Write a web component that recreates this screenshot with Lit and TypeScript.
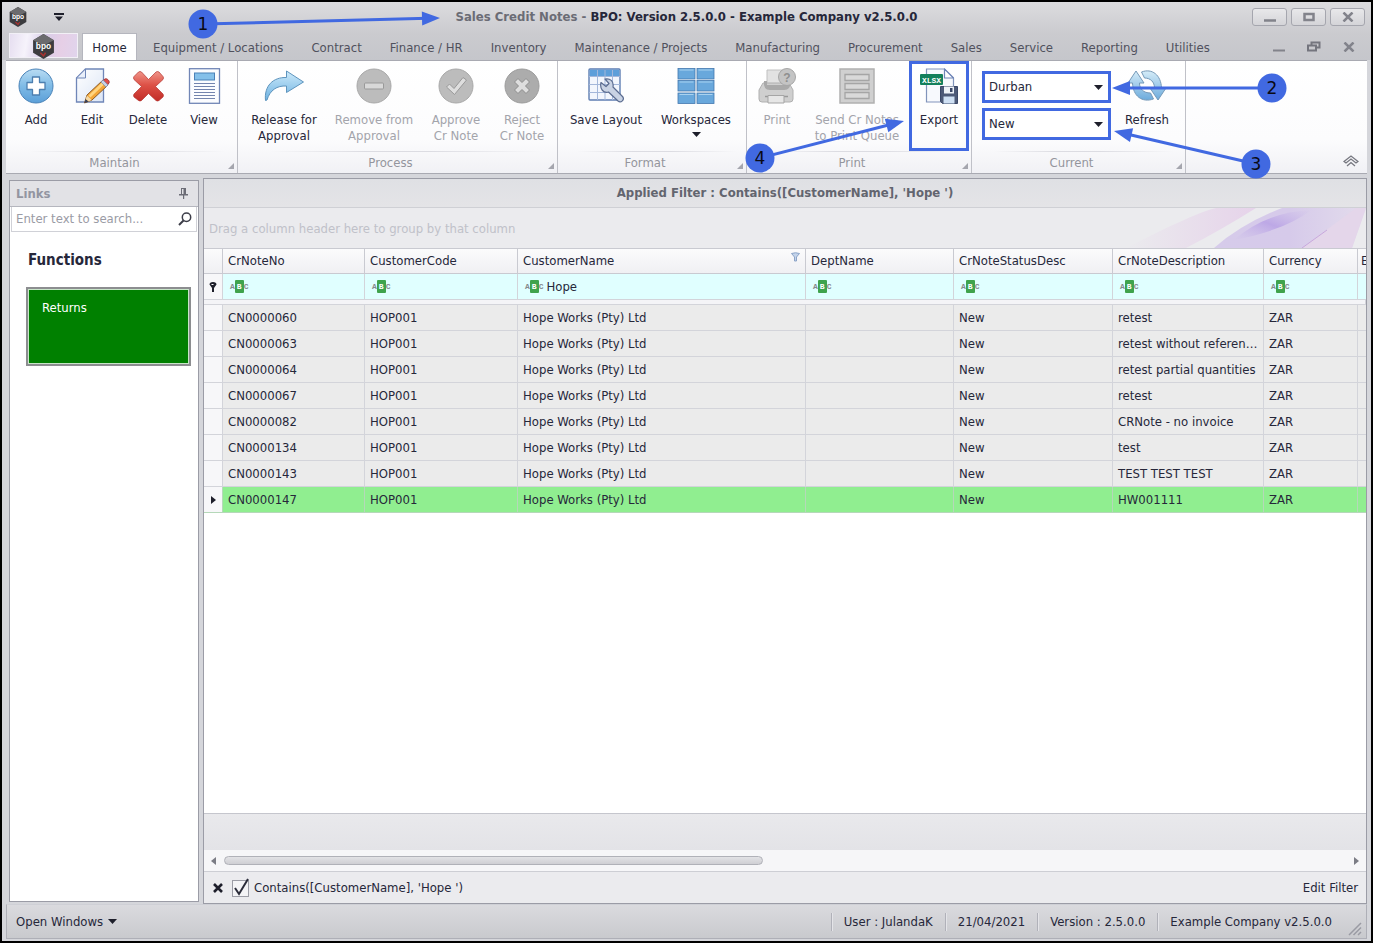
import { LitElement, html, css, nothing, TemplateResult } from "lit";
import { customElement, property } from "lit/decorators.js";
import { classMap } from "lit/directives/class-map.js";
import { styleMap } from "lit/directives/style-map.js";

const icons: Record<string, TemplateResult> = {
  add: html`<svg viewBox="0 0 36 36" width="36" height="36" aria-hidden="true">
    <defs><linearGradient id="g" x1="0" y1="0" x2="0" y2="1"><stop offset="0" stop-color="#b9dcf3" /><stop offset="0.5" stop-color="#7fbbe6" /><stop offset="1" stop-color="#5b9fd8" /></linearGradient></defs>
    <circle cx="18" cy="18" r="17" fill="url(#g)" stroke="#4a83b8" />
    <path d="M14.5 9h7v5.500h5.500v7h-5.500v5.500h-7v-5.500h-5.500v-7h5.500z" fill="#fff" stroke="#4d7fb0" stroke-width="1.300" stroke-linejoin="round" />
  </svg>`,
  edit: html`<svg viewBox="0 0 36 36" width="36" height="36" aria-hidden="true">
    <defs><linearGradient id="p" x1="0" y1="0" x2="1" y2="1"><stop offset="0" stop-color="#fff" /><stop offset="1" stop-color="#dbe5f5" /></linearGradient></defs>
    <path d="M11.500 1h18v33h-27v-24z" fill="url(#p)" stroke="#6f86b8" stroke-width="1.300" />
    <path d="M11.500 1v9h-9z" fill="#e9effa" stroke="#6f86b8" stroke-linejoin="round" />
    <path d="M10.500 35l2.500-8 16-15 5 5-16 15z" fill="#f3a638" stroke="#8a5a27" stroke-linejoin="round" />
    <path d="M14.500 27.500l14.500-14 2 2-14.500 14z" fill="#ffd581" />
    <path d="M29 12.500l2-1.500c2-1 5 2 4 4l-1.500 2z" fill="#e0504a" stroke="#a23a3a" />
    <path d="M27 14l2-2 5 5-2 2z" fill="#c7d3e6" stroke="#7c8bab" stroke-width="0.700" />
    <path d="M10.500 35l1.200-4 3 2.500z" fill="#39425c" />
    <path d="M13 27.500l-1.300 3.500 3 2.500 3-1.500z" fill="#f4d9a6" />
  </svg>`,
  del: html`<svg viewBox="0 0 36 36" width="36" height="36" aria-hidden="true">
    <defs><linearGradient id="r" x1="0" y1="0" x2="0" y2="1"><stop offset="0" stop-color="#f0958a" /><stop offset="0.450" stop-color="#dd5247" /><stop offset="1" stop-color="#c22c27" /></linearGradient></defs>
    <path d="M4 8.500L8.500 4q1.500-1 3 0L18.500 11.500 26 4q1.500-1 3 0L33 8.500q1 1.500 0 3L25.500 18.500 33 26q1 1.500 0 3L29 32.500q-1.500 1-3 0L18.500 25.500 11.500 32.500q-1.500 1-3 0L4 29q-1-1.500 0-3L11.500 18.500 4 11.500q-1-1.500 0-3z" fill="url(#r)" stroke="#b3342f" stroke-width="0.700" />
  </svg>`,
  view: html`<svg viewBox="0 0 36 36" width="36" height="36" aria-hidden="true">
    <rect x="3.500" y="0.700" width="30" height="34.600" fill="#fbfcff" stroke="#7186b6" stroke-width="1.300" />
    <rect x="8.500" y="5" width="20" height="7" fill="#84c0ea" stroke="#4b81b8" />
    <path d="M8 15.500h21M8 18.500h21M8 21.500h21M8 24.500h21M8 27.500h21M8 30.500h21" stroke="#7384ae" stroke-width="1.200" />
  </svg>`,
  release: html`<svg viewBox="0 0 40 36" width="40" height="36" aria-hidden="true">
    <defs><linearGradient id="a" x1="0" y1="0" x2="0" y2="1"><stop offset="0" stop-color="#cdeafa" /><stop offset="1" stop-color="#6db2e2" /></linearGradient></defs>
    <path d="M1.500 32.500C0 18 9 9 22.500 9.500V3L39.500 14 22.500 24.500v-6.500C13 17.500 6 22 3 32z" fill="url(#a)" stroke="#5e94bd" stroke-linejoin="round" />
  </svg>`,
  remove: html`<svg viewBox="0 0 36 36" width="36" height="36" aria-hidden="true">
    <circle cx="18" cy="18" r="17" fill="#bcbcbc" stroke="#a9a9a9" />
    <rect x="8.500" y="15" width="19" height="6" rx="1" fill="#d8d8d8" stroke="#999" />
  </svg>`,
  approve: html`<svg viewBox="0 0 36 36" width="36" height="36" aria-hidden="true">
    <circle cx="18" cy="18" r="17" fill="#bcbcbc" stroke="#a9a9a9" />
    <path d="M8.500 19l3-3 4.500 4.500L25 9.500l3.500 2.500L16.500 26.500z" fill="#dedede" stroke="#999" stroke-linejoin="round" />
  </svg>`,
  reject: html`<svg viewBox="0 0 36 36" width="36" height="36" aria-hidden="true">
    <circle cx="18" cy="18" r="17" fill="#acacac" stroke="#9c9c9c" />
    <path d="M10.500 14l3.500-3.500 4 4 4-4 3.500 3.500-4 4 4 4-3.500 3.500-4-4-4 4-3.500-3.500 4-4z" fill="#dedede" stroke="#8d8d8d" stroke-linejoin="round" />
  </svg>`,
  layout: html`<svg viewBox="0 0 36 36" width="36" height="36" aria-hidden="true">
    <rect x="1" y="1" width="31" height="31" rx="1" fill="#f2f6fd" stroke="#5f7eb2" stroke-width="1.400" />
    <rect x="1.700" y="1.700" width="29.600" height="7" fill="#5d9fda" />
    <path d="M9.500 2v30M17 2v30M24.500 2v30M1 8.500h31M1 16.500h31M1 24.500h31" stroke="#a3b7da" />
    <path d="M13 14.500l5 4 3-3-4-4.500c5-1 9 2 8 8l9.500 9.500c2.500 3-1.500 7-4.500 4.500L20.500 24c-5 1.500-9-3-7.500-9.500z" fill="#c9d3e4" stroke="#5b6c90" stroke-width="1.200" stroke-linejoin="round" />
  </svg>`,
  workspaces: html`<svg viewBox="0 0 38 36" width="38" height="36" aria-hidden="true">
    ${[0.5, 12.5, 25].map((y) => [1, 20].map((x) => html`<svg x="0" y="0" viewBox="0 0 38 36" width="38" height="36"><rect x=${x} y=${y} width="17" height="10.500" fill="#69a8dc" stroke="#4478ae" stroke-width="0.800" /><path d="M${x + 1.5} ${y + 1.500}h14" stroke="#a9d2f0" /></svg>`))}
  </svg>`,
  print: html`<svg viewBox="0 0 38 36" width="38" height="36" aria-hidden="true">
    <path d="M9 2h18v15H9z" fill="#e2e2e2" stroke="#c0c0c0" />
    <path d="M5 15l-4 7v9q0 3 3 3h28q3 0 3-3v-9l-4-7z" fill="#cfcfcf" stroke="#b0b0b0" />
    <path d="M6 13h3v4h18v-4l5 1q1 8-6 8H12q-7 0-6-9z" fill="#a9a9a9" />
    <path d="M7 28.500h23" stroke="#999" stroke-width="1.500" />
    <path d="M10 27.500h16v7.500H10z" fill="#e6e6e6" stroke="#a5a5a5" />
    <circle cx="29" cy="9" r="8.500" fill="#c4c4c4" stroke="#a6a6a6" />
    <text x="29" y="13.500" text-anchor="middle" class="q">?</text>
  </svg>`,
  queue: html`<svg viewBox="0 0 36 36" width="36" height="36" aria-hidden="true">
    <rect x="1" y="1" width="34" height="34" fill="#d0d0d0" stroke="#b0b0b0" stroke-width="1.500" />
    <path d="M6 6.500h24v6H6zM6 15.500h24v6H6zM6 24.500h24v6H6z" fill="#d9d9d9" stroke="#a5a5a5" stroke-width="1.300" />
  </svg>`,
  export: html`<svg viewBox="0 0 38 36" width="38" height="36" aria-hidden="true">
    <path d="M6.500 1h18l9 9v24h-27z" fill="#f7f9fd" stroke="#8194bb" stroke-width="1.200" />
    <path d="M24.500 1v9h9z" fill="#fff" stroke="#6f86b8" stroke-width="1.200" stroke-linejoin="round" />
    <rect x="0" y="6" width="23" height="11" rx="1" fill="#14805c" />
    <text x="11.500" y="14.500" text-anchor="middle" class="x">XLSX</text>
    <path d="M20.500 18.500h17v17h-15l-2-2z" fill="#4d5a78" stroke="#3b4868" />
    <path d="M24 18.500h10v7h-10z" fill="#eef2f8" /><path d="M30 20h2.500v4h-2.500z" fill="#3b4868" />
    <path d="M23.500 28.500h11v7h-11z" fill="#cfe0f4" />
  </svg>`,
  refresh: html`<svg viewBox="0 0 38 36" width="38" height="36" aria-hidden="true">
    <defs><linearGradient id="f" x1="0" y1="0" x2="0" y2="1"><stop offset="0" stop-color="#d5ecf8" /><stop offset="1" stop-color="#6cabdc" /></linearGradient></defs>
    <path d="M8 3l8 12h-4.500c0 6 4 10 11 10l3 6C14 35 5 28 4.500 15H0z" fill="url(#f)" stroke="#7599b8" stroke-linejoin="round" />
    <path d="M30 32l-8-12h4.500c0-6-4-10-10-10l-3-6C24 0 33 7 33.500 20H38z" fill="url(#f)" stroke="#7599b8" stroke-linejoin="round" />
  </svg>`,
};

const logo = (size: number) => html`<svg viewBox="0 0 24 24" width=${size} height=${size} aria-hidden="true">
  <path d="M12 0l10 6v12l-10 6-10-6V6z" fill="#3c3c3f" />
  <path d="M12 0l10 6-10 5L2 6z" fill="#6b6b6e" />
  <path d="M9 18l3 3 2-3" stroke="#a8322f" stroke-width="1.500" fill="none" />
  <text x="12" y="14" text-anchor="middle" class="logo">bpo</text>
</svg>`;

interface Action {
  icon: string;
  lines: string[];
  size: string;
  disabled?: boolean;
  menu?: boolean;
  marked?: boolean;
}
interface Group {
  title: string;
  size: string;
  actions: Action[];
  filters?: string[];
}

const groups: Group[] = [
  {
    title: "Maintain", size: "g-maintain", actions: [
      { icon: "add", lines: ["Add"], size: "w56" },
      { icon: "edit", lines: ["Edit"], size: "w56" },
      { icon: "del", lines: ["Delete"], size: "w56" },
      { icon: "view", lines: ["View"], size: "w56" },
    ],
  },
  {
    title: "Process", size: "g-process", actions: [
      { icon: "release", lines: ["Release for", "Approval"], size: "w88" },
      { icon: "remove", lines: ["Remove from", "Approval"], size: "w92", disabled: true },
      { icon: "approve", lines: ["Approve", "Cr Note"], size: "w72", disabled: true },
      { icon: "reject", lines: ["Reject", "Cr Note"], size: "w60", disabled: true },
    ],
  },
  {
    title: "Format", size: "g-format", actions: [
      { icon: "layout", lines: ["Save Layout"], size: "w92" },
      { icon: "workspaces", lines: ["Workspaces"], size: "w88", menu: true },
    ],
  },
  {
    title: "Print", size: "g-print", actions: [
      { icon: "print", lines: ["Print"], size: "w56", disabled: true },
      { icon: "queue", lines: ["Send Cr Notes", "to Print Queue"], size: "w104", disabled: true },
      { icon: "export", lines: ["Export"], size: "w60", marked: true },
    ],
  },
  {
    title: "Current", size: "g-current", filters: ["Durban", "New"], actions: [
      { icon: "refresh", lines: ["Refresh"], size: "w72" },
    ],
  },
];

const tabs = ["Home", "Equipment / Locations", "Contract", "Finance / HR", "Inventory", "Maintenance / Projects", "Manufacturing", "Procurement", "Sales", "Service", "Reporting", "Utilities"];

const columns = [
  { name: "CrNoteNo", width: 142 },
  { name: "CustomerCode", width: 153 },
  { name: "CustomerName", width: 288, filter: "Hope" },
  { name: "DeptName", width: 148 },
  { name: "CrNoteStatusDesc", width: 159 },
  { name: "CrNoteDescription", width: 151 },
  { name: "Currency", width: 94 },
];

const notes: [string, string][] = [
  ["CN0000060", "retest"],
  ["CN0000063", "retest without reference"],
  ["CN0000064", "retest partial quantities"],
  ["CN0000067", "retest"],
  ["CN0000082", "CRNote - no invoice"],
  ["CN0000134", "test"],
  ["CN0000143", "TEST TEST TEST"],
  ["CN0000147", "HW001111"],
];

const base = css`
  * { box-sizing: border-box; }
  button, input, select { font: inherit; color: inherit; margin: 0; }
  button { background: none; border: 0; padding: 0; }
  svg { display: block; flex: none; }
  .logo { font: bold 8px "Liberation Sans", sans-serif; fill: #fff; }
`;

@customElement("ribbon-bar")
export class RibbonBar extends LitElement {
  static styles = [base, css`
    :host { display: flex; height: 114px; border: 1px solid #a9aab2; border-width: 1px 0; background: linear-gradient(#fff, #fcfcfd 70%, #f1f1f5); }
    .group { display: flex; flex-direction: column; border-right: 1px solid #c0c1c8; }
    .g-maintain { width: 232px; }
    .g-process { width: 320px; }
    .g-format { width: 189px; }
    .g-print { width: 225px; }
    .g-current { width: 214px; }
    .items { flex: 1; display: flex; padding-left: 2px; min-height: 0; }
    .g-current .items { padding-left: 10px; }
    .action { display: flex; flex-direction: column; align-items: center; border: 3px solid transparent; padding-top: 4px; white-space: nowrap; line-height: 16px; }
    .action svg { margin-bottom: 8px; }
    .action .caret { margin: 4px 0 0; }
    .action:disabled { color: #a3a4ab; }
    .action.marked { border-color: #4169e1; }
    .w56 { width: 56px; } .w60 { width: 60px; } .w72 { width: 72px; }
    .w88 { width: 88px; } .w92 { width: 92px; } .w104 { width: 104px; }
    .foot { height: 22px; display: flex; align-items: center; color: #94959d; line-height: 20px; background: linear-gradient(90deg, transparent 10%, #dcdce2 40%, #dcdce2 60%, transparent 95%) top / 100% 1px no-repeat; }
    .foot span { flex: 1; text-align: center; padding: 2px 5px 0 0; }
    .foot svg { align-self: flex-end; margin: 0 3px 4px 0; }
    .filters { display: flex; flex-direction: column; gap: 5px; padding-top: 10px; }
    .pick { display: grid; }
    .pick > * { grid-area: 1 / 1; }
    .pick svg { justify-self: end; align-self: center; margin-right: 8px; pointer-events: none; }
    select { appearance: none; width: 129px; height: 32px; border: 3px solid #4169e1; border-radius: 0; background: #fff; padding: 0 20px 0 4px; }
    .rest { flex: 1; display: flex; justify-content: flex-end; align-items: flex-end; padding: 0 8px 6px 0; }
    .q { font: bold 12px "Liberation Sans", sans-serif; fill: #8f8f8f; }
    .x { font: bold 8px "Liberation Mono", monospace; fill: #fff; }
  `];

  caret() {
    return html`<svg class="caret" viewBox="0 0 9 5" width="9" height="5" aria-hidden="true"><path d="M0 0h9L4.500 5z" fill="#1e1f2b" /></svg>`;
  }

  render() {
    return html`${groups.map((g) => html`
      <section class="group ${g.size}">
        <div class="items">
          ${g.filters ? html`<div class="filters">${g.filters.map((f) => html`
            <label class="pick"><select aria-label=${f === "New" ? "Status" : "Site"}><option>${f}</option></select>${this.caret()}</label>`)}</div>` : nothing}
          ${g.actions.map((a) => html`
            <button class=${classMap({ action: true, [a.size]: true, marked: !!a.marked })} ?disabled=${a.disabled}>
              ${icons[a.icon]}${a.lines.map((l) => html`<span>${l}</span>`)}${a.menu ? this.caret() : nothing}
            </button>`)}
        </div>
        <div class="foot"><span>${g.title}</span><svg viewBox="0 0 6 6" width="6" height="6" aria-hidden="true"><path d="M6 0v6H0z" fill="#a5a6ae" /></svg></div>
      </section>`)}
      <div class="rest"><button aria-label="Collapse ribbon"><svg viewBox="0 0 16 12" width="16" height="12"><path d="M1 6.500L8 1l7 5.500-2 1.500-5-4-5 4zM4 11l4-3.500 4 3.500" fill="none" stroke="#777880" stroke-width="1.300" /></svg></button></div>`;
  }
}

@customElement("credit-note-grid")
export class CreditNoteGrid extends LitElement {
  static styles = [base, css`
    :host { display: flex; flex-direction: column; min-width: 0; overflow: hidden; border: 1px solid #9b9ca6; background: #fff; }
    .caption { height: 29px; line-height: 28px; text-align: center; font-weight: bold; color: #63656f; background: linear-gradient(#dfe0e4, #e4e4e7); border-bottom: 1px solid #cfd0d5; }
    .grouping { display: flex; justify-content: space-between; height: 40px; line-height: 42px; color: #c0c1c9; background: #ebebee; padding-left: 5px; }
    .wrap { overflow: hidden; }
    table { width: 100%; table-layout: fixed; border-collapse: separate; border-spacing: 0; }
    th, td { height: 26px; padding: 0 5px; text-align: left; font-weight: normal; white-space: nowrap; overflow: hidden; text-overflow: ellipsis; border: 0 solid #d3d4da; border-width: 0 1px 1px 0; }
    .mark { padding: 0; background: #f7f7f9; }
    .mark svg { margin: 0 auto; }
    .head th { background: linear-gradient(#fbfbfc, #f0f0f3); border-top: 1px solid #c9cad1; border-color: #c9cad1; }
    .last { text-overflow: clip; padding: 0 0 0 3px; border-right: 0; }
    .cell { display: flex; justify-content: space-between; }
    .find td { background: #e0ffff; }
    .find .mark { background: #f7f7f9; }
    .search { display: flex; align-items: center; }
    .abc { display: flex; align-items: center; font: bold 8px/13px "Liberation Mono", monospace; color: #85888c; padding: 0 3px 0 2px; }
    .abc b { background: #3fa34d; color: #fff; padding: 0 2px; border-radius: 1px; }
    .search input { flex: 1; min-width: 0; width: 0; border: 0; padding: 0; background: none; outline: 0; }
    .gap td { height: 5px; padding: 0; background: #f4f4f7; }
    .row td { background: #ebebeb; }
    .row .mark { background: #f7f7f9; }
    .row.on td { background: #90ee90; border-color: #b5d8b9; }
    .row.on .mark { background: #f7f7f9; }
    .fill { flex: 1; }
    .summary { height: 37px; border-top: 1px solid #c5c6cd; background: linear-gradient(#e9e9ec, #e3e3e7); }
    .scroll { height: 21px; display: flex; align-items: center; gap: 8px; padding: 0 7px; background: #f6f6f8; }
    .track { flex: 1; }
    .thumb { height: 9px; border: 1px solid #b0b1b8; border-radius: 5px; background: linear-gradient(#e2e2e5, #cfcfd4); }
    .expr { height: 32px; display: flex; align-items: center; border-top: 1px solid #cdced4; background: #ebebee; padding: 0 8px; }
    .check { display: flex; align-items: center; gap: 4px; margin: 0 auto 0 8px; }
    .tick { display: grid; }
    .tick > * { grid-area: 1 / 1; }
    .tick input { appearance: none; width: 17px; height: 17px; align-self: end; border: 1px solid #9c9da6; background: #f4f4f6; }
    .tick svg { pointer-events: none; }
  `];

  render() {
    return html`
      <div class="caption">Applied Filter : Contains([CustomerName], 'Hope ')</div>
      <div class="grouping"><span>Drag a column header here to group by that column</span>
        <svg viewBox="0 0 260 40" width="260" height="40" aria-hidden="true">
          <defs>
            <linearGradient id="v" x1="0" y1="0" x2="1" y2="0"><stop offset="0" stop-color="#d6cbea" /><stop offset="0.500" stop-color="#d6caea" /><stop offset="1" stop-color="#e3dcec" /></linearGradient>
            <linearGradient id="k" x1="0" y1="0" x2="1" y2="0"><stop offset="0" stop-color="#ebebee" /><stop offset="1" stop-color="#e6d3ea" /></linearGradient>
            <linearGradient id="s" x1="0" y1="1" x2="1" y2="0"><stop offset="0" stop-color="#cbbbe9" stop-opacity="0" /><stop offset="0.500" stop-color="#bda8e6" /><stop offset="1" stop-color="#cbbbe9" stop-opacity="0" /></linearGradient>
          </defs>
          <path d="M20 40C60 20 90 5 110 0h40Q115 22 80 40z" fill="url(#k)" />
          <path d="M108 40Q135 16 176 0h84l-14 40z" fill="url(#v)" />
          <path d="M128 32Q160 4 205 2 180 22 128 32z" fill="url(#s)" />
          <path d="M196 40L250 0h10l-14 40z" fill="#e4d6ea" />
          <path d="M196 40l25-18" stroke="#c7a8dc" />
        </svg>
      </div>
      <div class="wrap"><table>
        <colgroup><col style="width:19px">${columns.map((c) => html`<col style=${styleMap({ width: `${c.width}px` })}>`)}<col></colgroup>
        <thead>
          <tr class="head"><th class="mark"></th>${columns.map((c) => html`<th><div class="cell">${c.name}${c.filter ? html`<svg viewBox="0 0 9 10" width="9" height="10" aria-hidden="true"><path d="M0.500 1.500q4-1.500 8 0L5.500 5v4h-2V5z" fill="#c3d3ea" stroke="#8ba3c7" /></svg>` : nothing}</div></th>`)}<th class="last">E</th></tr>
          <tr class="find"><td class="mark"><svg viewBox="0 0 8 10" width="8" height="10" aria-hidden="true"><path d="M0.500 2.500q0-2.500 3.500-2.500t3.500 2.500L5 6v4H3V6z" fill="#1e1f2b" /><path d="M2.500 2.500h2" stroke="#fff" /></svg></td>
            ${columns.map((c) => html`<td><label class="search"><span class="abc" aria-hidden="true">A<b>B</b>C</span><input aria-label="Filter ${c.name}" .value=${c.filter ?? ""}></label></td>`)}<td class="last"></td></tr>
          <tr class="gap"><td colspan="9"></td></tr>
        </thead>
        <tbody>
          ${notes.map(([no, text], i) => html`<tr class=${classMap({ row: true, on: i === notes.length - 1 })}>
            <td class="mark">${i === notes.length - 1 ? html`<svg viewBox="0 0 5 8" width="5" height="8" aria-hidden="true"><path d="M0 0l5 4-5 4z" fill="#1e1f2b" /></svg>` : nothing}</td>
            <td>${no}</td><td>HOP001</td><td>Hope Works (Pty) Ltd</td><td></td><td>New</td><td>${text}</td><td>ZAR</td><td class="last"></td></tr>`)}
        </tbody>
      </table></div>
      <div class="fill"></div>
      <div class="summary"></div>
      <div class="scroll">
        <svg viewBox="0 0 5 8" width="5" height="8" aria-hidden="true"><path d="M5 0L0 4l5 4z" fill="#7b7c85" /></svg>
        <div class="track"><div class="thumb" style=${styleMap({ width: "48%" })}></div></div>
        <svg viewBox="0 0 5 8" width="5" height="8" aria-hidden="true"><path d="M0 0l5 4-5 4z" fill="#7b7c85" /></svg>
      </div>
      <div class="expr">
        <button aria-label="Clear filter"><svg viewBox="0 0 12 10" width="12" height="10"><path d="M2 1l8 8M10 1L2 9" stroke="#1e1f2b" stroke-width="2.600" /></svg></button>
        <label class="check"><span class="tick"><input type="checkbox" checked><svg viewBox="0 0 18 19" width="18" height="19" aria-hidden="true"><path d="M3 10l4 6L16 1" fill="none" stroke="#2b2c3a" stroke-width="2" /></svg></span>Contains([CustomerName], 'Hope ')</label>
        <button>Edit Filter</button>
      </div>`;
  }
}

@customElement("callout-layer")
export class CalloutLayer extends LitElement {
  static styles = css`
    :host { position: absolute; inset: -2px; pointer-events: none; overflow: hidden; }
    svg { display: block; width: 100%; height: 100%; }
    path { fill: #4169e1; }
    line { stroke: #4169e1; stroke-width: 3; }
    circle { fill: #4169e1; }
    text { font: 17px "DejaVu Sans", sans-serif; text-anchor: middle; fill: #0a0a14; }
  `;
  @property({ attribute: false }) marks = [
    { n: 1, x: 203, y: 24, tx: 440, ty: 18 },
    { n: 2, x: 1272, y: 88, tx: 1112, ty: 88 },
    { n: 3, x: 1256, y: 164, tx: 1114, ty: 131 },
    { n: 4, x: 760, y: 158, tx: 904, ty: 121 },
  ];
  render() {
    return html`<svg aria-hidden="true">${this.marks.map((m) => {
      const angle = (Math.atan2(m.ty - m.y, m.tx - m.x) * 180) / Math.PI;
      const length = Math.hypot(m.tx - m.x, m.ty - m.y);
      return html`<svg overflow="visible"><g transform="translate(${m.x} ${m.y}) rotate(${angle})"><line x2=${length - 12}></line><path d="M${length} 0l-18 -7v14z"></path></g>
        <circle cx=${m.x} cy=${m.y} r="14.500"></circle><text x=${m.x} y=${m.y + 6}>${m.n}</text></svg>`;
    })}</svg>`;
  }
}

@customElement("app-root")
export class AppRoot extends LitElement {
  static styles = [base, css`
    :host { display: flex; flex-direction: column; position: relative; min-height: 100vh; box-sizing: border-box; border: 2px solid #000; background: #d5d6db; font: 13px/18px "DejaVu Sans Condensed", "Noto Sans", sans-serif; color: #26273a; padding: 0 4px 2px; }
    .title { display: grid; grid-template-columns: 1fr auto 1fr; align-items: center; height: 31px; margin: 0 -4px; padding: 0 6px 2px; background: linear-gradient(#dcdcdf, #cbcbcf); }
    .quick { display: flex; align-items: center; gap: 26px; }
    h1 { margin: 0; font-size: 13px; line-height: 18px; }
    h1 span { color: #6b6c75; }
    .win { display: flex; justify-content: flex-end; gap: 4px; }
    .win button { width: 35px; height: 18px; border: 1px solid #a5a6ae; border-radius: 3px; background: linear-gradient(#e8e8ea, #d4d4d8); display: grid; place-items: center; }
    .tabs { display: flex; height: 27px; margin: 0 -4px; padding: 0 4px; background: linear-gradient(#cbcbcf, #c5c6cb); color: #50515d; }
    .app { width: 69px; height: 25px; margin: 0 4px 0 3px; border: 1px solid #f2f0f6; background: linear-gradient(100deg, #e6def0, #f6f3fb 25%, #d8cde8 50%, #e6cfe6 75%, #e0d4ec); display: grid; place-items: center; }
    .tab { padding: 2px 14px 0; white-space: nowrap; }
    .tab.on { width: 55px; margin-right: 2px; padding: 2px 0 0; background: #fff; color: #26273a; border: 1px solid #b5b6be; border-bottom: 0; }
    .mdi { margin-left: auto; display: flex; align-items: center; gap: 22px; padding-right: 12px; }
    .work { flex: 1; display: flex; gap: 4px; padding: 4px 0 0 3px; }
    .links { width: 190px; margin: 2px 0; border: 1px solid #9b9ca6; background: #fff; }
    .bar { display: flex; justify-content: space-between; align-items: center; height: 26px; padding: 0 10px 0 6px; font-weight: bold; color: #9395a1; background: #e2e2e6; border-bottom: 1px solid #b5b6be; }
    .seek { display: flex; align-items: center; height: 25px; margin: 0 1px; padding: 0 4px; border: 1px solid #d0d1d7; border-top: 0; }
    .seek input { flex: 1; min-width: 0; border: 0; padding: 0; outline: 0; background: none; }
    .seek input::placeholder { color: #9a9ba5; opacity: 1; }
    h2 { margin: 18px 18px 17px; font-size: 15px; line-height: 20px; }
    .tile { display: block; width: 165px; height: 79px; margin: 0 16px; padding: 10px 14px; border: 2px solid #8c8d90; outline: 1px solid #c8e6c8; outline-offset: -3px; background: #008000; color: #fff; text-align: left; vertical-align: top; }
    .tile span { display: block; height: 100%; }
    credit-note-grid { flex: 1; }
    .status { display: flex; align-items: center; height: 35px; padding: 0 4px 0 9px; border: 1px solid #aeafb7; border-top-color: #cfd0d6; background: linear-gradient(#dadade, #c9cace); }
    .open { display: flex; align-items: center; gap: 5px; margin-right: auto; }
    .field { padding: 0 12px; border-left: 1px solid #b0b1b9; box-shadow: inset 1px 0 #e4e4e8; }
    .grip { align-self: flex-end; margin: 0 0 2px 4px; }
  `];

  render() {
    return html`
      <header class="title">
        <div class="quick">${logo(20)}<button aria-label="Customize quick access"><svg viewBox="0 0 10 8" width="10" height="8"><path d="M0 0h10v2H0zM1 3.500h8L5 8z" fill="#1e1f2b" /></svg></button></div>
        <h1><span>Sales Credit Notes -</span> BPO: Version 2.5.0.0 - Example Company v2.5.0.0</h1>
        <div class="win">
          <button aria-label="Minimize"><svg viewBox="0 0 12 10" width="12" height="10"><path d="M0 8.500h12" stroke="#82838b" stroke-width="2.500" /></svg></button>
          <button aria-label="Maximize"><svg viewBox="0 0 12 10" width="12" height="10"><path d="M1.500 2h9v6h-9z" fill="none" stroke="#82838b" stroke-width="2.500" /></svg></button>
          <button aria-label="Close"><svg viewBox="0 0 12 10" width="12" height="10"><path d="M1.500 0.500l9 9M10.500 0.500l-9 9" stroke="#82838b" stroke-width="2.500" /></svg></button>
        </div>
      </header>
      <nav class="tabs">
        <button class="app" aria-label="Application menu">${logo(25)}</button>
        ${tabs.map((t, i) => html`<button class=${classMap({ tab: true, on: i === 0 })}>${t}</button>`)}
        <div class="mdi">
          <button aria-label="Minimize document"><svg viewBox="0 0 12 10" width="12" height="10"><path d="M0 8.500h12" stroke="#82838b" stroke-width="2" /></svg></button>
          <button aria-label="Restore document"><svg viewBox="0 0 14 11" width="14" height="11"><path d="M4.500 4V1.500h8v5H9.500M1 4.500h8v5H1z" fill="none" stroke="#74757e" stroke-width="2" /></svg></button>
          <button aria-label="Close document"><svg viewBox="0 0 12 10" width="12" height="10"><path d="M1.500 0.500l9 9M10.500 0.500l-9 9" stroke="#82838b" stroke-width="2.500" /></svg></button>
        </div>
      </nav>
      <ribbon-bar></ribbon-bar>
      <main class="work">
        <aside class="links">
          <div class="bar">Links<svg viewBox="0 0 9 11" width="9" height="11" aria-hidden="true"><path d="M2 0h5v6H2zM0 6h9v1.500H0zM4 7h1.200v4H4z" fill="#6c6d77" /><path d="M3 1h1.500v5H3z" fill="#e2e2e6" /></svg></div>
          <label class="seek"><input type="text" placeholder="Enter text to search..." aria-label="Search links"><svg viewBox="0 0 14 14" width="14" height="14" aria-hidden="true"><circle cx="8.500" cy="5.200" r="4.200" fill="none" stroke="#3c3d48" stroke-width="1.500" /><path d="M5.500 8.500L1 13" stroke="#3c3d48" stroke-width="2" /></svg></label>
          <h2>Functions</h2>
          <button class="tile"><span>Returns</span></button>
        </aside>
        <credit-note-grid></credit-note-grid>
      </main>
      <footer class="status">
        <button class="open">Open Windows<svg viewBox="0 0 9 5" width="9" height="5" aria-hidden="true"><path d="M0 0h9L4.500 5z" fill="#1e1f2b" /></svg></button>
        <span class="field">User : JulandaK</span><span class="field">21/04/2021</span><span class="field">Version : 2.5.0.0</span><span class="field">Example Company v2.5.0.0</span>
        <svg class="grip" viewBox="0 0 14 14" width="14" height="14" aria-hidden="true"><path d="M1 13L13 1M5.500 13L13 5.500M10 13l3-3" stroke="#9a9ba4" stroke-width="1.500" /></svg>
      </footer>
      <callout-layer></callout-layer>`;
  }
}
